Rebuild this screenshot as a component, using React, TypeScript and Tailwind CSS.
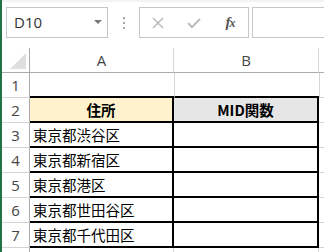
import React from "react";

const jp = { fontFamily: '"Noto Sans CJK JP", "Noto Sans", sans-serif' };
const ui = { fontFamily: '"Open Sans", "Noto Sans", "Liberation Sans", sans-serif' };

const rows = ["東京都渋谷区", "東京都新宿区", "東京都港区", "東京都世田谷区", "東京都千代田区"];

function RowHead({ n }: { n: string }) {
  return (
    <div
      className="w-[28px] h-[25px] shrink-0 border-r border-b border-r-[#ababab] border-b-[#d4d4d4] flex items-center justify-center text-[15px] text-[#444]"
      style={ui}
    >
      {n}
    </div>
  );
}

export default function App() {
  return (
    <div className="w-[324px] h-[252px] overflow-hidden bg-white flex">
      <div className="w-[2px] h-full bg-[#217346] shrink-0" />
      <div className="flex-1 flex flex-col min-w-0">
        {/* formula bar */}
        <div className="h-[48px] shrink-0 flex flex-col bg-white">
          <div className="h-[2px] bg-[#f3f3f3]" />
          <div className="flex items-start pt-[5px] pl-[4px]">
            <div className="w-[102px] h-[31px] border border-[#c6c6c6] flex items-center justify-between pl-[7px] pr-[5px]">
              <span className="text-[15px] text-[#333]" style={ui}>D10</span>
              <svg width="8" height="5" viewBox="0 0 8 5"><path d="M0 0 L8 0 L4 4 Z" fill="#777" /></svg>
            </div>
            <div className="w-[31px] h-[31px] flex flex-col items-center justify-center gap-[3px]">
              <div className="w-[2px] h-[2px] bg-[#a6a6a6]" />
              <div className="w-[2px] h-[2px] bg-[#a6a6a6]" />
              <div className="w-[2px] h-[2px] bg-[#a6a6a6]" />
            </div>
            <div className="w-[110px] h-[31px] border border-[#c6c6c6] flex items-center">
              <div className="w-[36px] flex justify-center">
                <svg width="12" height="12" viewBox="0 0 12 12"><path d="M1 1 L11 11 M11 1 L1 11" stroke="#bdbdbd" strokeWidth="1.6" /></svg>
              </div>
              <div className="w-[36px] flex justify-center">
                <svg width="14" height="12" viewBox="0 0 14 12"><path d="M1 6 L5 10 L13 2" stroke="#bdbdbd" strokeWidth="2" fill="none" /></svg>
              </div>
              <div className="w-[36px] flex justify-center">
                <span className="text-[15px] italic text-[#555] font-semibold tracking-[-1px]" style={{ fontFamily: '"Liberation Serif", serif' }}>
                  f<span className="text-[12px]">x</span>
                </span>
              </div>
            </div>
            <div className="ml-[3px] flex-1 h-[31px] border border-r-0 border-[#c6c6c6]" />
          </div>
        </div>
        {/* header row */}
        <div className="flex h-[25px] shrink-0">
          <div className="w-[28px] h-[25px] shrink-0 border-r border-b border-[#ababab] flex items-end justify-end pr-[3px] pb-[3px]">
            <svg width="16" height="16" viewBox="0 0 16 16"><path d="M16 0 L16 16 L0 16 Z" fill="#dfdfdf" /></svg>
          </div>
          <div className="w-[144px] shrink-0 border-r border-r-[#d4d4d4] border-b border-b-[#ababab] flex items-center justify-center text-[15px] text-[#444]" style={ui}>A</div>
          <div className="w-[145px] shrink-0 border-r border-r-[#d4d4d4] border-b border-b-[#ababab] flex items-center justify-center text-[15px] text-[#444]" style={ui}>B</div>
          <div className="flex-1 border-b border-b-[#ababab]" />
        </div>
        {/* row 1 */}
        <div className="flex h-[25px] shrink-0">
          <RowHead n="1" />
          <div className="w-[144px] shrink-0 border-b-2 border-black" />
          <div className="w-[145px] shrink-0 border-b-2 border-black border-l border-l-[#d4d4d4]" />
          <div className="flex-1 border-l border-[#d4d4d4] border-b" />
        </div>
        {/* row 2 */}
        <div className="flex h-[25px] shrink-0">
          <RowHead n="2" />
          <div className="w-[144px] shrink-0 border-b-2 border-r-2 border-black bg-[#fff2cc] flex items-center justify-center font-bold text-[14.5px] text-black" style={jp}>住所</div>
          <div className="w-[145px] shrink-0 border-b-2 border-r-2 border-black bg-[#e7e6e6] flex items-center justify-center font-bold text-[14.5px] text-black" style={jp}>MID関数</div>
          <div className="flex-1 border-b border-[#d4d4d4]" />
        </div>
        {rows.map((t, i) => (
          <div key={t} className="flex h-[25px] shrink-0">
            <RowHead n={String(i + 3)} />
            <div className="w-[144px] shrink-0 border-b-2 border-r-2 border-black flex items-center pl-[3px] text-[14.5px] text-black" style={jp}>{t}</div>
            <div className="w-[145px] shrink-0 border-b-2 border-r-2 border-black" />
            <div className="flex-1 border-b border-[#d4d4d4]" />
          </div>
        ))}
        <div className="flex h-[25px] shrink-0">
          <div className="w-[28px] h-[25px] shrink-0 border-r border-r-[#ababab]" />
          <div className="w-[144px] shrink-0 border-r border-[#d4d4d4]" />
          <div className="w-[145px] shrink-0 border-r border-[#d4d4d4]" />
          <div className="flex-1" />
        </div>
      </div>
    </div>
  );
}
